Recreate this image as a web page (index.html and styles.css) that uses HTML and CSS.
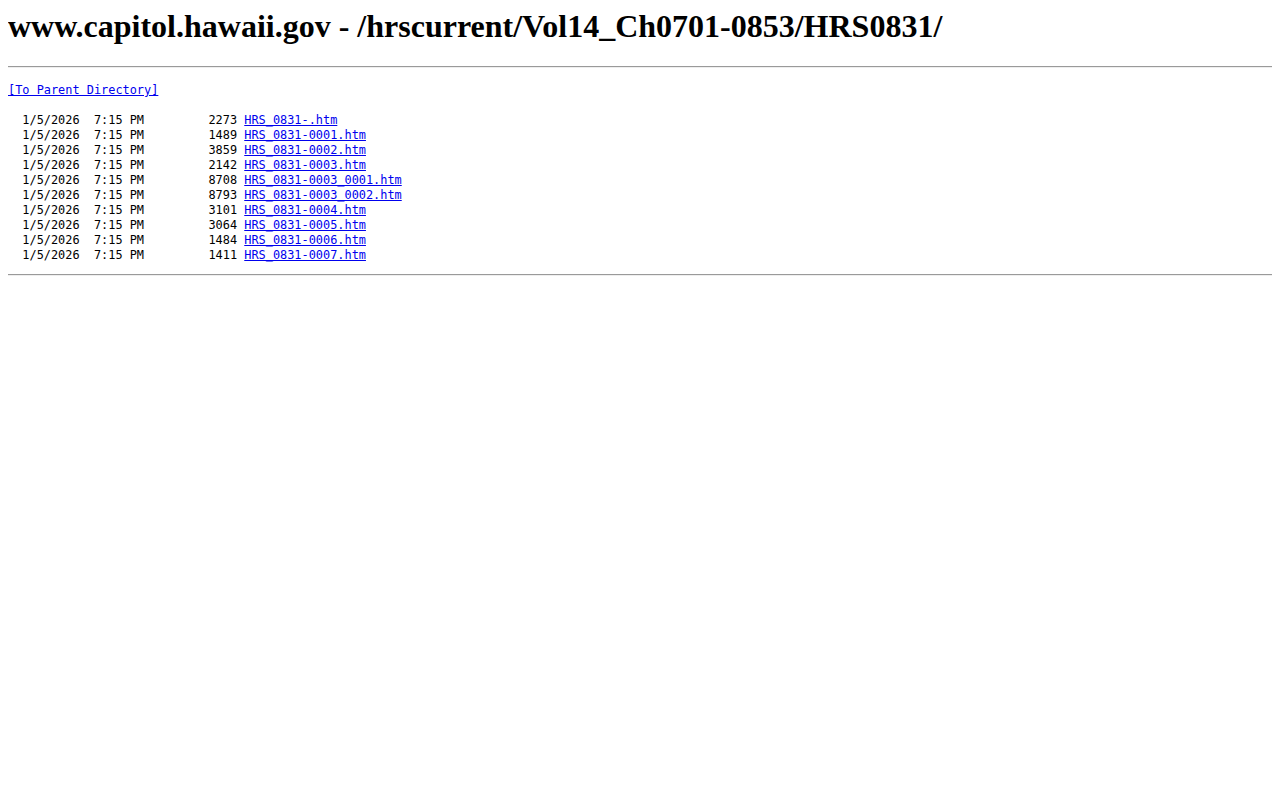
FILE: index.html
```html
<!DOCTYPE html>
<html>
<head>
<meta charset="utf-8">
<title>www.capitol.hawaii.gov - /hrscurrent/Vol14_Ch0701-0853/HRS0831/</title>
<link rel="stylesheet" href="styles.css">
</head>
<body class="page">
<h1 class="title">www.capitol.hawaii.gov - /hrscurrent/Vol14_Ch0701-0853/HRS0831/</h1>
<hr class="rule">
<pre class="listing"><a class="link" href="#">[To Parent Directory]</a><br><br>  1/5/2026  7:15 PM         2273 <a class="link" href="#">HRS_0831-.htm</a><br>  1/5/2026  7:15 PM         1489 <a class="link" href="#">HRS_0831-0001.htm</a><br>  1/5/2026  7:15 PM         3859 <a class="link" href="#">HRS_0831-0002.htm</a><br>  1/5/2026  7:15 PM         2142 <a class="link" href="#">HRS_0831-0003.htm</a><br>  1/5/2026  7:15 PM         8708 <a class="link" href="#">HRS_0831-0003_0001.htm</a><br>  1/5/2026  7:15 PM         8793 <a class="link" href="#">HRS_0831-0003_0002.htm</a><br>  1/5/2026  7:15 PM         3101 <a class="link" href="#">HRS_0831-0004.htm</a><br>  1/5/2026  7:15 PM         3064 <a class="link" href="#">HRS_0831-0005.htm</a><br>  1/5/2026  7:15 PM         1484 <a class="link" href="#">HRS_0831-0006.htm</a><br>  1/5/2026  7:15 PM         1411 <a class="link" href="#">HRS_0831-0007.htm</a><br></pre>
<hr class="rule">
</body>
</html>
```
FILE: styles.css
```css
.page {
  margin: 8px;
  background: #ffffff;
  color: #000000;
  font-family: "Liberation Serif", "Times New Roman", serif;
}

.title {
  margin: 0 0 21.44px 0;
  font-size: 32px;
  font-weight: bold;
  line-height: 36.8px;
}

.rule {
  margin: 8px 0;
  border: 0;
  border-top: 1px solid #9a9a9a;
  border-bottom: 1px solid #eeeeee;
  height: 0;
}

.listing {
  margin: 15px 0 11px 0;
  font-family: "DejaVu Sans Mono", "Liberation Mono", monospace;
  font-size: 11.9px;
  line-height: 15px;
  color: #000000;
}

.link {
  color: #0000ee;
  text-decoration: underline;
}
```
